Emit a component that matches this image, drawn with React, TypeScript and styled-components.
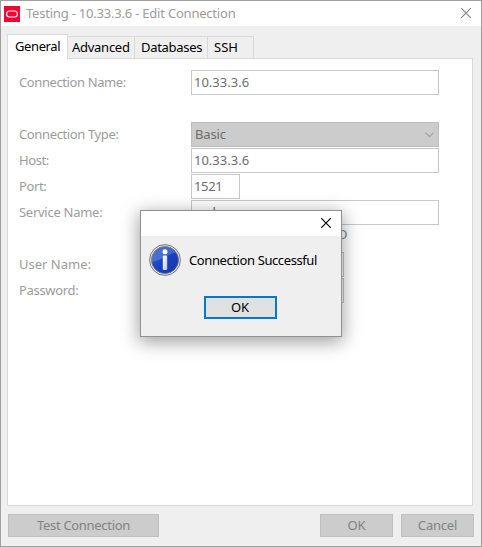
import React from 'react';
import styled, { createGlobalStyle, css } from 'styled-components';

const GlobalStyle = createGlobalStyle`
  * { box-sizing: border-box; }
  body { margin: 0; background: #efefef; }
`;

const Window = styled.main`
  position: relative;
  display: flex;
  flex-direction: column;
  width: 482px;
  height: 547px;
  border: 1px solid #a0a0a0;
  background: #efefef;
  color: #9c9c9c;
  font: 13px/16px "Noto Sans", "Open Sans", sans-serif;
  overflow: hidden;
`;

const Text = styled.span<{ $track?: number }>`
  display: block;
  white-space: pre;
  letter-spacing: ${(p) => p.$track ?? 0}px;
`;

const TitleBar = styled.header`
  display: flex;
  align-items: center;
  flex: 0 0 25px;
  padding: 0 10px 0 3px;
  background: #fff;

  ${Text} { padding-bottom: 2px; }
`;

const AppIcon = styled.svg`
  display: block;
  width: 16px;
  height: 16px;
  margin-right: 6px;
`;

const CloseIcon = styled.svg`
  display: block;
  width: 10px;
  height: 10px;
  margin: 0 0 1px auto;
`;

const Tabs = styled.nav`
  display: flex;
  align-items: flex-end;
  height: 32px;
  margin-left: 6px;
  color: #000;
`;

const Tab = styled.div<{ $width: number; $indent: number; $active?: boolean }>`
  width: ${(p) => p.$width}px;
  height: 22px;
  padding: 2px 0 0 ${(p) => p.$indent}px;
  border: 1px solid #d9d9d9;
  border-width: 1px 1px 0 0;
  ${(p) =>
    p.$active &&
    css`
      position: relative;
      z-index: 1;
      height: 25px;
      margin-bottom: -1px;
      padding-top: 3px;
      border-left-width: 1px;
      background: #fff;
    `}
`;

const Panel = styled.section`
  width: 466px;
  height: 448px;
  margin-left: 6px;
  padding: 11px 0 0 11px;
  border: 1px solid #d9d9d9;
  background: #fff;
`;

const Row = styled.div<{ $gap?: number }>`
  display: grid;
  grid-template-columns: 172px auto;
  height: 25px;
  margin-bottom: ${(p) => p.$gap ?? 1}px;
`;

const Label = styled.label`
  padding-top: 4px;
`;

const Field = styled.div<{ $width: number; $filled?: boolean }>`
  display: flex;
  align-items: center;
  justify-content: space-between;
  width: ${(p) => p.$width}px;
  height: 25px;
  padding: ${(p) => (p.$filled ? '0 4px 1px 3px' : '0 3px 2px 2px')};
  border: 1px solid ${(p) => (p.$filled ? '#bdbdbd' : '#c8c8c8')};
  background: ${(p) => (p.$filled ? '#ccc' : '#fff')};
  color: #6d6d6d;
`;

const Chevron = styled.svg`
  display: block;
  width: 9px;
  height: 6px;
  margin-top: 2px;
`;

const ServiceOption = styled.div`
  height: 25px;
  margin-bottom: 1px;
  padding: 0 0 0 319px;
  color: #858585;
`;

const Footer = styled.footer`
  display: flex;
  padding: 8px 7px 0;
  gap: 8px;
`;

const Button = styled.button<{ $width: number; $focus?: boolean; $push?: boolean }>`
  display: flex;
  align-items: center;
  justify-content: center;
  width: ${(p) => p.$width}px;
  height: 23px;
  margin: 0 0 0 ${(p) => (p.$push ? 'auto' : '0')};
  padding: 0 0 2px;
  border: 1px solid #bfbfbf;
  background: #ccc;
  color: #838383;
  font: inherit;
  ${(p) =>
    p.$focus &&
    css`
      padding-right: 1px;
      border: 2px solid #0078d7;
      background: #e1e1e1;
      color: #000;
    `}
`;

const Dialog = styled.div`
  position: absolute;
  z-index: 2;
  left: 139px;
  top: 209px;
  width: 202px;
  height: 127px;
  border: 1px solid #919191;
  background: #efefef;
  color: #000;
  box-shadow: 0 4px 17px 1px rgba(0, 0, 0, 0.38);
`;

const DialogBar = styled.header`
  display: flex;
  align-items: center;
  height: 25px;
  padding-right: 10px;
  background: #fff;
`;

const Message = styled.div`
  display: flex;
  align-items: center;
  height: 32px;
  margin: 8px 0 20px 8px;
  gap: 8px;
`;

const InfoIcon = styled.svg`
  display: block;
  width: 32px;
  height: 32px;
`;

const DialogActions = styled.div`
  padding-left: 63px;
`;

const Close = ({ color }: { color: string }) => (
  <CloseIcon viewBox="0 0 10 10">
    <path d="M.2.2l9.6 9.6M9.8.2L.2 9.8" stroke={color} strokeWidth="1.2" />
  </CloseIcon>
);

const Info = () => (
  <InfoIcon viewBox="0 0 32 32">
    <defs>
      <linearGradient id="blue" x1="0" y1="0" x2="1" y2="1">
        <stop offset="0" stopColor="#3563cf" />
        <stop offset="0.5" stopColor="#1943c2" />
        <stop offset="1" stopColor="#1234a8" />
      </linearGradient>
      <linearGradient id="gloss" x1="0" y1="0" x2="0.4" y2="1">
        <stop offset="0" stopColor="#fff" stopOpacity="0.12" />
        <stop offset="1" stopColor="#fff" stopOpacity="0.2" />
      </linearGradient>
      <linearGradient id="stem" x1="0" y1="0" x2="1" y2="1">
        <stop offset="0" stopColor="#fff" />
        <stop offset="1" stopColor="#c4c4c4" />
      </linearGradient>
    </defs>
    <circle cx="16" cy="16" r="15.4" fill="#e4e4e4" stroke="#777" strokeWidth="1" />
    <circle cx="16" cy="16" r="13.5" fill="url(#blue)" stroke="#686d79" strokeWidth=".8" />
    <path d="M3 18Q9 17 16 13T27 8.5A13.2 13.2 0 0 0 3 18Z" fill="url(#gloss)" />
    <circle cx="16" cy="7.8" r="2.5" fill="#fff" />
    <rect x="13.8" y="11.5" width="4.4" height="14.5" rx="1.2" fill="url(#stem)" />
  </InfoIcon>
);

export default function App() {
  return (
    <>
      <GlobalStyle />
      <Window>
        <TitleBar>
          <AppIcon viewBox="0 0 16 16">
            <path d="M0 0h16v16H0z" fill="#f8002f" />
            <rect x="2.6" y="5" width="10.8" height="6" rx="3" fill="none" stroke="#fff" strokeWidth="1.1" />
          </AppIcon>
          <Text $track={-0.21}>Testing - 10.33.3.6 - Edit Connection</Text>
          <Close color="#888" />
        </TitleBar>
        <Tabs>
          <Tab $width={61} $indent={7} $active><Text $track={-0.4}>General</Text></Tab>
          <Tab $width={67} $indent={4}><Text $track={-0.27}>Advanced</Text></Tab>
          <Tab $width={73} $indent={6}><Text $track={-0.3}>Databases</Text></Tab>
          <Tab $width={46} $indent={6}><Text>SSH</Text></Tab>
        </Tabs>
        <Panel>
          <Row $gap={27}>
            <Label><Text $track={-0.4}>Connection Name:</Text></Label>
            <Field $width={248}><Text>10.33.3.6</Text></Field>
          </Row>
          <Row>
            <Label><Text $track={-0.37}>Connection Type:</Text></Label>
            <Field $width={248} $filled>
              <Text $track={-0.15}>Basic</Text>
              <Chevron viewBox="0 0 9 6"><path d="M.5.7l4 4 4-4" fill="none" stroke="#a0a0a0" strokeWidth="1.1" /></Chevron>
            </Field>
          </Row>
          <Row>
            <Label><Text $track={-0.4}>Host:</Text></Label>
            <Field $width={248}><Text>10.33.3.6</Text></Field>
          </Row>
          <Row>
            <Label><Text $track={-0.4}>Port:</Text></Label>
            <Field $width={49}><Text $track={-0.35}>1521</Text></Field>
          </Row>
          <Row>
            <Label><Text $track={-0.27}>Service Name:</Text></Label>
            <Field $width={248}><Text $track={-0.2}>orcl</Text></Field>
          </Row>
          <ServiceOption>D</ServiceOption>
          <Row>
            <Label><Text>User Name:</Text></Label>
            <Field $width={153} />
          </Row>
          <Row>
            <Label><Text $track={-0.33}>Password:</Text></Label>
            <Field $width={153} />
          </Row>
        </Panel>
        <Footer>
          <Button $width={151}><Text $track={-0.3}>Test Connection</Text></Button>
          <Button $width={73} $push><Text>OK</Text></Button>
          <Button $width={73}><Text $track={-0.2}>Cancel</Text></Button>
        </Footer>
        <Dialog role="dialog">
          <DialogBar><Close color="#000" /></DialogBar>
          <Message>
            <Info />
            <Text $track={-0.4}>Connection Successful</Text>
          </Message>
          <DialogActions><Button $width={73} $focus><Text>OK</Text></Button></DialogActions>
        </Dialog>
      </Window>
    </>
  );
}
